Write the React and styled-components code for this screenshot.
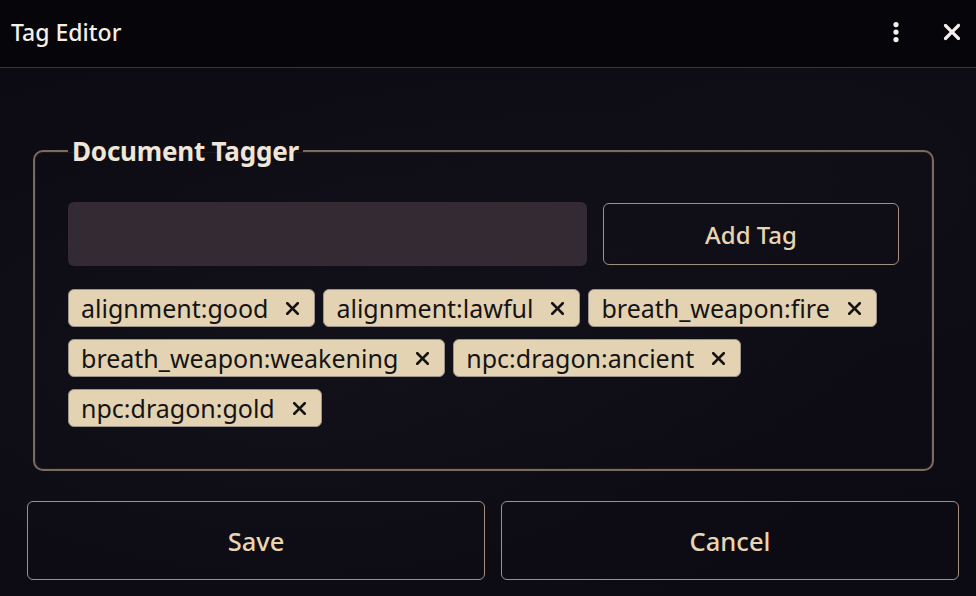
import React from 'react'
import styled, { createGlobalStyle } from 'styled-components'
import { FaEllipsisVertical, FaXmark } from 'react-icons/fa6'

const GlobalStyle = createGlobalStyle`
  html, body {
    margin: 0;
    padding: 0;
    background: #0c0b13;
  }
  * {
    box-sizing: border-box;
  }
`

const Window = styled.div`
  width: 976px;
  height: 596px;
  display: flex;
  flex-direction: column;
  font-family: "Noto Sans", "Open Sans", sans-serif;
  color: #efe6d8;
  background:
    radial-gradient(ellipse at 30% 60%, rgba(30, 28, 40, 0.35), transparent 60%),
    radial-gradient(ellipse at 80% 30%, rgba(25, 22, 32, 0.3), transparent 55%),
    #0c0b13;
  overflow: hidden;
`

const Header = styled.header`
  height: 68px;
  flex-shrink: 0;
  display: flex;
  align-items: center;
  padding: 0 9px 4px 11px;
  background: #060509;
  border-bottom: 1px solid #3b3537;
`

const Title = styled.h1`
  flex: 1;
  margin: 0;
  font-size: 23px;
  font-weight: 500;
  color: #f4efe8;
`

const HeaderButton = styled.button`
  display: flex;
  align-items: center;
  justify-content: center;
  width: 30px;
  height: 30px;
  padding: 0;
  margin-left: ${p => p.$gap || 0}px;
  border: none;
  background: none;
  color: #f4efe8;
  font-size: ${p => p.$size || 22}px;
`

const Content = styled.div`
  flex: 1;
  display: flex;
  flex-direction: column;
  padding: 68px 17px 0 27px;
`

const Fieldset = styled.fieldset`
  margin: 0 25px 0 6px;
  padding: 36px 33px 42px 33px;
  border: 2px solid #7a6b61;
  border-radius: 10px;
  box-shadow: inset 0 0 0 1px rgba(40, 32, 30, 0.6);
`

const Legend = styled.legend`
  padding: 0 4px;
  margin-left: 0;
  font-size: 26px;
  font-weight: 700;
  letter-spacing: -0.2px;
  color: #efe6d8;
  line-height: 30px;
`

const InputRow = styled.div`
  display: flex;
  gap: 16px;
  align-items: center;
`

const TagInput = styled.input`
  flex: 1;
  height: 64px;
  border: none;
  border-radius: 6px;
  background: #342a33;
  color: #efe6d8;
  font: inherit;
  font-size: 22px;
  padding: 0 12px;
  outline: none;
`

const OutlineButton = styled.button`
  display: flex;
  align-items: center;
  justify-content: center;
  width: ${p => (p.$fill ? 'auto' : `${p.$width}px`)};
  flex: ${p => (p.$fill ? 1 : 'none')};
  height: ${p => p.$height}px;
  border: 1px solid #a39080;
  border-radius: 6px;
  background: transparent;
  color: #e8d6b3;
  font-family: "Noto Sans", "Open Sans", sans-serif;
  font-size: ${p => p.$font || 24}px;
  font-weight: 500;
`

const TagList = styled.div`
  display: flex;
  flex-wrap: wrap;
  gap: 12px 8px;
  margin-top: 23px;
`

const Tag = styled.span`
  display: inline-flex;
  align-items: center;
  height: 38px;
  padding: 0 11px 1px 12px;
  border: 1px solid #9c958d;
  border-radius: 6px;
  background: #e3d3b3;
  color: #151313;
  font-size: 25px;
`

const RemoveIcon = styled(FaXmark)`
  margin-left: 14px;
  margin-top: 1px;
  font-size: 21px;
`

const Footer = styled.div`
  display: flex;
  gap: 16px;
  margin-top: 30px;
`

const tags = [
  'alignment:good',
  'alignment:lawful',
  'breath_weapon:fire',
  'breath_weapon:weakening',
  'npc:dragon:ancient',
  'npc:dragon:gold',
]

function App() {
  return (
    <>
      <GlobalStyle />
      <Window>
        <Header>
          <Title>Tag Editor</Title>
          <HeaderButton $size={24}><FaEllipsisVertical /></HeaderButton>
          <HeaderButton $gap={26} $size={26}><FaXmark /></HeaderButton>
        </Header>
        <Content>
          <Fieldset>
            <Legend>Document Tagger</Legend>
            <InputRow>
              <TagInput type="text" />
              <OutlineButton $width={296} $height={62}>Add Tag</OutlineButton>
            </InputRow>
            <TagList>
              {tags.map(t => (
                <Tag key={t}>
                  {t}
                  <RemoveIcon />
                </Tag>
              ))}
            </TagList>
          </Fieldset>
          <Footer>
            <OutlineButton $fill $height={79} $font={25.5}>Save</OutlineButton>
            <OutlineButton $fill $height={79} $font={25.5}>Cancel</OutlineButton>
          </Footer>
        </Content>
      </Window>
    </>
  )
}

export default App
